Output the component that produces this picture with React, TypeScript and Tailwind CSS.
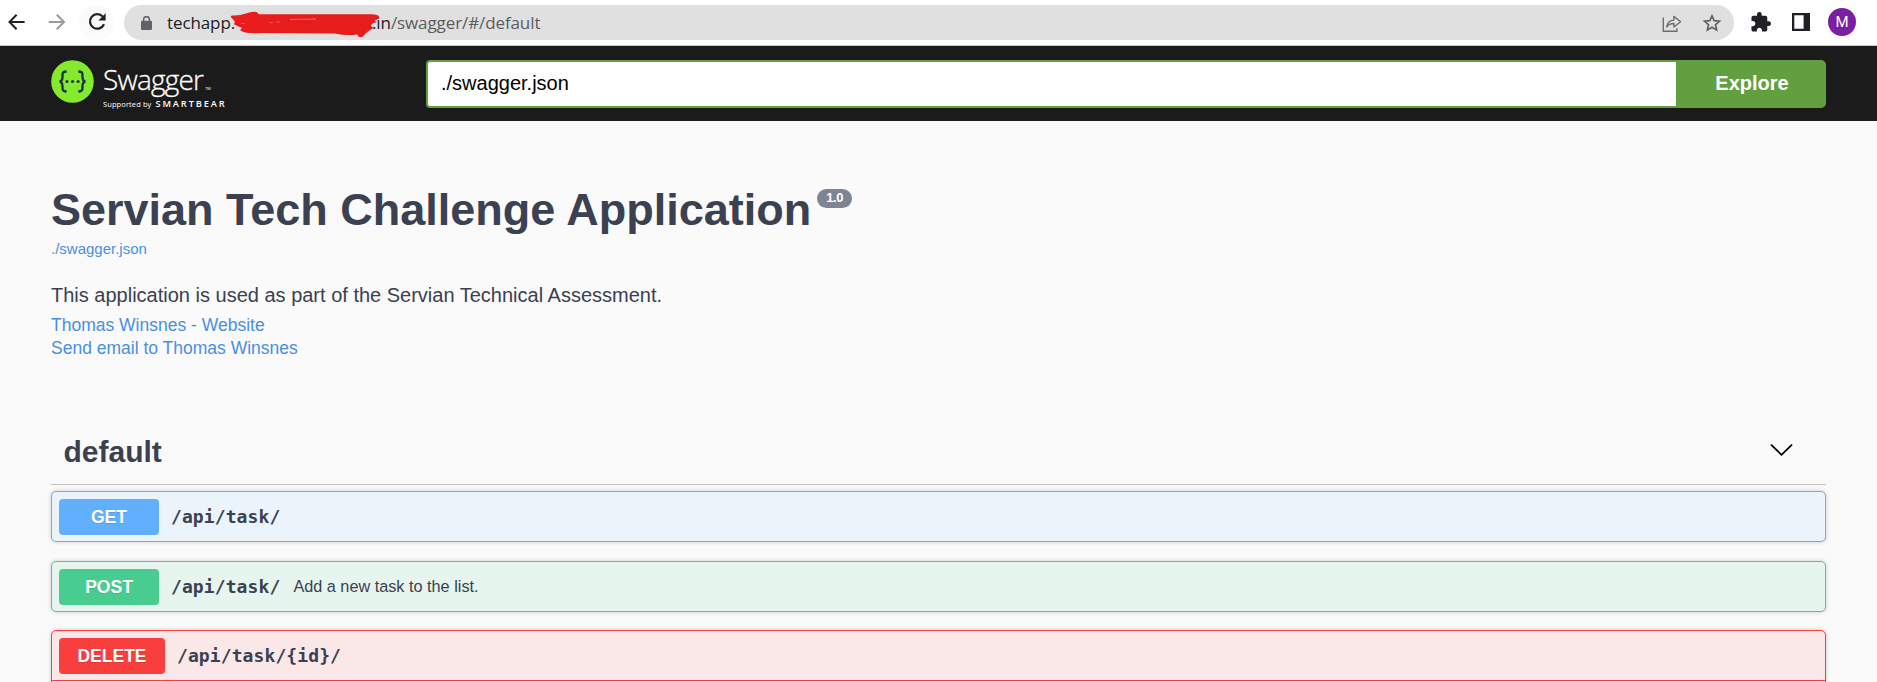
import React from "react";

const UI = "font-['Liberation_Sans',Arial,sans-serif]";

function Scribble() {
  return (
    <svg className="absolute left-[229px] top-[9px]" width="152" height="31" viewBox="229 9 152 31">
      <path
        d="M232 15.500 Q239 16 246 13.500 Q252 11 256.500 12 L259 14.300 L371 14.300 Q379 14.500 379 17 Q378 20 374.500 20.500 L377 22 Q371 23 371 26 L373.500 28 Q367 31 363 36.500 Q359 38.500 357 34.500 Q346 36 335 33.500 L262 33 Q244 34 240 30 L242 28 Q237 26 233.500 24 Q237 22 231.500 18 Q230 16 232 15.500 Z"
        fill="#e71c1c"
      />
      <path d="M290 19.500 L316 19" stroke="#f58a8a" strokeWidth="0.8" />
      <path d="M241 23.500 L245 23.500 M270 22.500 L273 22.500 M276 22 L280 22" stroke="#f06a6a" strokeWidth="0.8" />
    </svg>
  );
}

function BrowserBar() {
  return (
    <div className="relative flex h-[46px] shrink-0 items-start border-b border-[#c9cac9] bg-white pt-[5px]">
      <div className="flex h-[35px] w-[124px] shrink-0 items-center">
        <svg className="ml-[8px] mt-[-1px]" width="18" height="18" viewBox="0 0 18 18" fill="none" stroke="#202124" strokeWidth="2">
          <path d="M16.6 9H2M8.6 1.8 1.5 9l7.1 7.2" />
        </svg>
        <svg className="ml-[22px] mt-[-1px]" width="18" height="18" viewBox="0 0 18 18" fill="none" stroke="#9b9c9e" strokeWidth="2">
          <path d="M.8 9h14.6M8.8 1.8 16 9l-7.2 7.2" />
        </svg>
        <div className="ml-[13px] flex h-[35px] w-[35px] items-center justify-center rounded-full bg-[#fbfbfb]">
          <svg className="mt-[-1px]" width="20" height="20" viewBox="0 0 20 20" fill="none" stroke="#202124" strokeWidth="2.2">
            <path d="M15.8 4.6A7.3 7.3 0 1 0 17 12.3" />
            <path d="M18.6 1.2v7.2h-7.2z" fill="#202124" stroke="none" />
          </svg>
        </div>
      </div>
      <div className="flex h-[35px] w-[1610px] shrink-0 items-center rounded-full bg-[#e0e0e0] pl-[17px] pr-[12px]">
        <svg width="11" height="14" viewBox="0 0 11 14" fill="none">
          <rect y="4.8" width="11" height="9.2" rx="1.2" fill="#5f6368" />
          <path d="M2.6 5.5V3.6a2.9 2.9 0 0 1 5.8 0v1.9" stroke="#5f6368" strokeWidth="1.5" />
        </svg>
        <div className="ml-[15px] flex w-[380px] whitespace-pre font-['Open_Sans','Noto_Sans',sans-serif] text-[17px] leading-[24px] text-[#5a5c5e]">
          <span className="w-[205px] tracking-[-0.1px] text-[#202124]">techapp.</span>
          <span className="tracking-[-0.1px]"><span className="text-[#202124]">.in</span>/swagger/#/default</span>
        </div>
        <div className="ml-auto flex items-center gap-[20px]">
          <svg width="20" height="20" viewBox="0 0 20 20" fill="none" stroke="#6b6e71" strokeWidth="1.4">
            <path d="M1.3 4.5v13.8h13.6v-3" />
            <path d="M4.7 14c.7-4.500 3.300-6.700 7.200-6.900V3.400L18.600 8.700l-6.700 5.300v-3.500c-3.200-.1-5.300.8-7.200 3.500z" strokeLinejoin="round" />
          </svg>
          <svg width="20" height="20" viewBox="0 0 20 20" fill="none" stroke="#5f6368" strokeWidth="1.7">
            <path d="M10 2.800l2.150 4.900 5.350.5-4.050 3.500 1.200 5.200L10 14.150 5.350 16.900l1.200-5.200L2.500 8.200l5.350-.5z" />
          </svg>
        </div>
      </div>
      <div className="flex h-[35px] items-center">
        <svg className="ml-[17px] mt-[-1px]" width="20" height="20" viewBox="1.500 1 21.500 21.500" fill="#202124">
          <path d="M20.500 11H19V7c0-1.100-.9-2-2-2h-4V3.500a2.500 2.500 0 0 0-5 0V5H4c-1.100 0-1.990.9-1.990 2v3.800H3.500c1.490 0 2.700 1.210 2.700 2.700s-1.210 2.700-2.700 2.700H2V20c0 1.100.9 2 2 2h3.800v-1.500c0-1.490 1.210-2.700 2.700-2.700s2.700 1.210 2.700 2.700V22H17c1.100 0 2-.9 2-2v-4h1.500a2.500 2.500 0 0 0 0-5z" />
        </svg>
        <svg className="ml-[21px] mt-[-1px]" width="18" height="18" viewBox="0 0 18 18">
          <path d="M0 0h18v18H0zM2.300 2.300v13.400h9.300V2.300z" fill="#202124" fillRule="evenodd" />
        </svg>
        <div className="ml-[18px] mt-[-1px] flex h-[28px] w-[28px] items-center justify-center rounded-full bg-[#7b1fa2] font-['Roboto',sans-serif] text-[15px] text-white">
          M
        </div>
      </div>
      <Scribble />
    </div>
  );
}

function Logo() {
  return (
    <div className="flex w-[375px] shrink-0 items-start">
      <svg width="43" height="43" viewBox="0 0 44 44" fill="none">
        <circle cx="22" cy="22" r="21.800" fill="#85ea2d" />
        <g stroke="#173647" strokeWidth="2.400">
          <path d="M16 11.800c-3.300 0-4.200.8-4.200 3.400 0 3.200.5 6.300-3 6.800 3.500.5 3 3.600 3 6.800 0 2.600.9 3.400 4.200 3.400" />
          <path d="M28 11.800c3.300 0 4.200.8 4.200 3.400 0 3.200-.5 6.300 3 6.800-3.500.5-3 3.600-3 6.800 0 2.600-.9 3.400-4.200 3.400" />
        </g>
        <g fill="#173647">
          <circle cx="16.300" cy="22" r="1.600" />
          <circle cx="22" cy="22" r="1.600" />
          <circle cx="27.700" cy="22" r="1.600" />
        </g>
      </svg>
      <div className="ml-[9px] flex flex-col whitespace-nowrap font-['Open_Sans','Noto_Sans',sans-serif] text-white">
        <div className="flex items-end">
          <span className="text-[28px] font-light leading-[38px] tracking-[-0.800px] [-webkit-text-stroke:0.300px_white]">Swagger</span>
          <span className="mb-[6px] ml-[2px] text-[4px] leading-[6px]">TM</span>
        </div>
        <div className="flex items-baseline leading-[12px]">
          <span className="text-[7.500px] tracking-[0.100px]">Supported by</span>
          <span className="ml-[4px] text-[9.250px] font-semibold tracking-[1.900px]">SMARTBEAR</span>
        </div>
      </div>
    </div>
  );
}

function TopBar() {
  return (
    <div className="flex h-[75px] shrink-0 bg-[#1b1b1b] px-[51px] pt-[14px]">
      <Logo />
      <div className="flex h-[48px] flex-1 text-[20px]">
        <div className="flex flex-1 items-center rounded-l-[4px] border-2 border-r-0 border-[#62a03f] bg-white pb-[2px] pl-[13px] text-black">
          ./swagger.json
        </div>
        <button className="w-[150px] rounded-r-[5px] bg-[#62a03f] pb-[2px] pl-[2px] font-bold text-white">Explore</button>
      </div>
    </div>
  );
}

type Op = { method: string; path: string; summary?: string; box: string; badge: string };

const OPS: Op[] = [
  { method: "GET", path: "/api/task/", box: "h-[51px] mt-[6px] rounded-[5px] border-[#61affe] bg-[#ebf3fb]", badge: "w-[100px] bg-[#61affe]" },
  { method: "POST", path: "/api/task/", summary: "Add a new task to the list.", box: "h-[51px] mt-[19px] rounded-[5px] border-[#49cc90] bg-[#e6f5ee]", badge: "w-[100px] bg-[#49cc90]" },
  { method: "DELETE", path: "/api/task/{id}/", box: "h-[60px] mt-[18px] rounded-t-[5px] border-[#f93e3e] bg-[#fae7e7]", badge: "w-[106px] bg-[#f93e3e]" },
];

function Operation({ op }: { op: Op }) {
  const open = op.method === "DELETE";
  return (
    <div className={`shrink-0 border shadow-[0_0_4px_rgba(0,0,0,0.19)] ${op.box}`}>
      <div className={`flex items-center pl-[7px] ${open ? "h-[50px] border-b border-[#f93e3e]" : "h-[49px]"}`}>
        <div className={`flex h-[36px] items-center justify-center rounded-[4px] text-[17.500px] font-bold leading-[20px] text-white [text-shadow:0_1px_0_rgba(0,0,0,0.1)] ${op.badge}`}>
          {op.method}
        </div>
        <div className="ml-[12px] font-['DejaVu_Sans_Mono',monospace] text-[18px] font-bold tracking-[0.100px]">{op.path}</div>
        {op.summary && <div className="ml-[13px] text-[16.250px]">{op.summary}</div>}
      </div>
    </div>
  );
}

export default function App() {
  return (
    <div className={`flex h-[682px] w-[1877px] flex-col overflow-hidden bg-[#fafafa] text-[#3b4151] ${UI}`}>
      <BrowserBar />
      <TopBar />
      <main className="flex flex-col px-[51px] pt-[63px]">
        <div className="flex items-start">
          <h1 className="whitespace-nowrap text-[45px] font-bold leading-[52px]">Servian Tech Challenge Application</h1>
          <span className="ml-[6px] mt-[5px] flex h-[19px] w-[35px] items-center justify-center rounded-full bg-[#7d8492] pb-[2px] text-[13px] font-bold tracking-[-0.400px] text-white">
            1.0
          </span>
        </div>
        <a className="mt-[3px] text-[15px] leading-[20px] text-[#4990e2]">./swagger.json</a>
        <p className="mt-[21px] text-[20px] leading-[30px]">This application is used as part of the Servian Technical Assessment.</p>
        <a className="mt-[4px] text-[17.500px] leading-[23px] text-[#4990e2]">Thomas Winsnes - Website</a>
        <a className="text-[17.500px] leading-[23px] text-[#4990e2]">Send email to Thomas Winsnes</a>
        <div className="mt-[74px] flex h-[51px] shrink-0 items-start justify-between border-b border-[#c0c2c8] pl-[12.500px] pr-[33px]">
          <h2 className="text-[30px] font-bold leading-[36px]">default</h2>
          <svg className="mt-[10px]" width="23" height="14" viewBox="0 0 23 14" fill="none" stroke="#000" strokeWidth="1.800" strokeLinecap="round">
            <path d="M1.500 1.200 11.500 10.800 21.500 1.200" />
          </svg>
        </div>
        {OPS.map((op) => (
          <Operation key={op.method} op={op} />
        ))}
      </main>
    </div>
  );
}
